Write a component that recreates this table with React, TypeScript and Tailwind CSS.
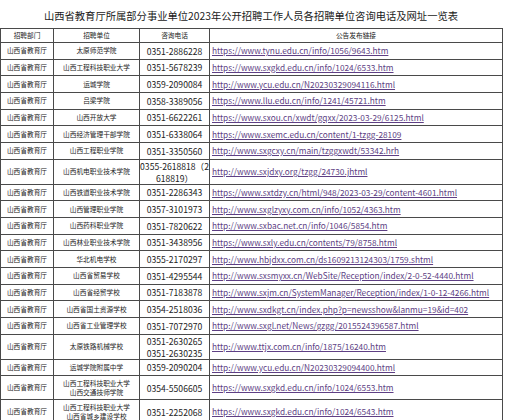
import React from "react";

type Row = {
  unit: string[];
  phone: string[];
  url: string;
  tall?: string;
};

const rows: Row[] = [
  { unit: ["太原师范学院"], phone: ["0351-2886228"], url: "https://www.tynu.edu.cn/info/1056/9643.htm" },
  { unit: ["山西工程科技职业大学"], phone: ["0351-5678239"], url: "https://www.sxgkd.edu.cn/info/1024/6533.htm" },
  { unit: ["运城学院"], phone: ["0359-2090084"], url: "http://www.ycu.edu.cn/N20230329094116.html" },
  { unit: ["吕梁学院"], phone: ["0358-3389056"], url: "https://www.llu.edu.cn/info/1241/45721.htm" },
  { unit: ["山西开放大学"], phone: ["0351-6622261"], url: "https://www.sxou.cn/xwdt/gqxx/2023-03-29/6125.html" },
  { unit: ["山西经济管理干部学院"], phone: ["0351-6338064"], url: "https://www.sxemc.edu.cn/content/1-tzgg-28109" },
  { unit: ["山西工程职业学院"], phone: ["0351-3350560"], url: "http://www.sxgcxy.cn/main/tzggxwdt/53342.hrh" },
  { unit: ["山西机电职业技术学院"], phone: ["0355-2618818（2", "618819）"], url: "http://www.sxjdxy.org/tzgg/24730.jhtml", tall: "h-[23px]" },
  { unit: ["山西铁道职业技术学院"], phone: ["0351-2286343"], url: "https://www.sxtdzy.cn/html/948/2023-03-29/content-4601.html" },
  { unit: ["山西管理职业学院"], phone: ["0357-3101973"], url: "http://www.sxglzyxy.com.cn/info/1052/4363.htm" },
  { unit: ["山西药科职业学院"], phone: ["0351-7820622"], url: "http://www.sxbac.net.cn/info/1046/5854.htm" },
  { unit: ["山西林业职业技术学院"], phone: ["0351-3438956"], url: "https://www.sxly.edu.cn/contents/79/8758.html" },
  { unit: ["华北机电学校"], phone: ["0355-2170297"], url: "http://www.hbjdxx.com.cn/ds1609213124303/1759.shtml" },
  { unit: ["山西省贸易学校"], phone: ["0351-4295544"], url: "http://www.sxsmyxx.cn/WebSite/Reception/index/2-0-52-4440.html" },
  { unit: ["山西省经贸学校"], phone: ["0351-7183878"], url: "http://www.sxjm.cn/SystemManager/Reception/index/1-0-12-4266.html" },
  { unit: ["山西省国土资源学校"], phone: ["0354-2518036"], url: "http://www.sxdkgt.cn/index.php?p=newsshow&lanmu=19&id=402" },
  { unit: ["山西省工业管理学校"], phone: ["0351-7072970"], url: "http://www.sxgl.net/News/gzgg/2015524396587.html" },
  { unit: ["太原铁路机械学校"], phone: ["0351-2630265", "0351-2630235"], url: "http://www.ttjx.com.cn/info/1875/16240.htm", tall: "h-[25px]" },
  { unit: ["运城学院附属中学"], phone: ["0359-2090204"], url: "http://www.ycu.edu.cn/N20230329094400.html" },
  { unit: ["山西工程科技职业大学", "山西交通技师学院"], phone: ["0354-5506605"], url: "https://www.sxgkd.edu.cn/info/1024/6553.htm", tall: "h-[24px]" },
  { unit: ["山西工程科技职业大学", "山西省城乡建设学校"], phone: ["0351-2252068"], url: "https://www.sxgkd.edu.cn/info/1024/6543.htm", tall: "h-[24px]" },
];

const cell = "border border-[#4a4a4a] p-0 align-middle";
const small = "text-[6.7px] leading-[9px] text-[#222] text-center";

export default function App() {
  return (
    <div className="w-[505px] h-[420px] overflow-hidden bg-white font-['Noto_Sans_CJK_SC','Noto_Sans',sans-serif]">
      {/* 标题 */}
      <div className="h-[28px] pt-[3px] flex items-center justify-center w-[502px]">
        <h1 className="text-[10.3px] leading-[12px] text-[#1a1a1a] font-normal whitespace-nowrap">
          山西省教育厅所属部分事业单位2023年公开招聘工作人员各招聘单位咨询电话及网址一览表
        </h1>
      </div>

      <table className="table-fixed border-collapse w-[502px]">
        <colgroup>
          <col className="w-[53px]" />
          <col className="w-[86px]" />
          <col className="w-[70px]" />
          <col className="w-[293px]" />
        </colgroup>
        <thead>
          <tr className="h-[14px]">
            <th className={`${cell} ${small} font-normal`}>招聘部门</th>
            <th className={`${cell} ${small} font-normal`}>招聘单位</th>
            <th className={`${cell} ${small} font-normal`}>咨询电话</th>
            <th className={`${cell} ${small} font-normal`}>公告发布链接</th>
          </tr>
        </thead>
        <tbody>
          {rows.map((r, i) => (
            <tr key={i} className={r.tall ?? "h-[16.67px]"}>
              <td className={`${cell} ${small}`}>山西省教育厅</td>
              <td className={`${cell} ${small}`}>
                {r.unit.map((u, j) => (
                  <div key={j}>{u}</div>
                ))}
              </td>
              <td className={`${cell} text-center text-[8.6px] leading-[12px] text-[#222]`}>
                {r.phone.map((p, j) => (
                  <div key={j} className="whitespace-nowrap">{p}</div>
                ))}
              </td>
              <td className={`${cell} pl-[2px] whitespace-nowrap text-[8.3px] leading-[11px]`}>
                <a href="#" className="text-[#5e3f84] underline">
                  {r.url}
                </a>
              </td>
            </tr>
          ))}
        </tbody>
      </table>
    </div>
  );
}
